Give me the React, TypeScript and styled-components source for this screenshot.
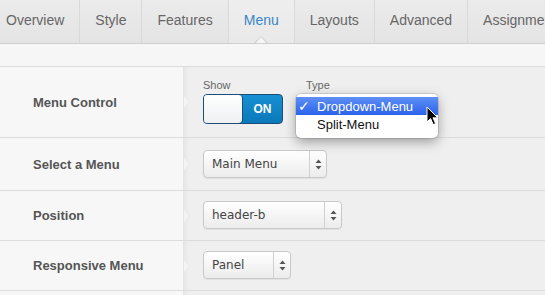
import styled, { createGlobalStyle } from 'styled-components';

const GlobalStyle = createGlobalStyle`
  html, body {
    margin: 0;
    padding: 0;
    background: #efefef;
  }
  body {
    font-family: "Liberation Sans", Arial, sans-serif;
  }
`;

const tabs = ['Overview', 'Style', 'Features', 'Menu', 'Layouts', 'Advanced', 'Assignments'];

const SelectArrows = () => (
  <svg width="7" height="11" viewBox="0 0 7 11">
    <path d="M3.5 0.5 L6.5 4 L0.5 4 Z" fill="#555" />
    <path d="M3.5 10.5 L6.5 7 L0.5 7 Z" fill="#555" />
  </svg>
);

const Cursor = () => (
  <CursorMark width="13" height="20" viewBox="0 0 13 20">
    <path
      d="M1 1 L1 16 L4.6 12.6 L7.2 18.6 L9.6 17.6 L7 11.8 L11.8 11.8 Z"
      fill="#000"
      stroke="#fff"
      strokeWidth="1"
      strokeLinejoin="round"
    />
  </CursorMark>
);

const App = () => {
  return (
    <>
      <GlobalStyle />
      <Page>
        <TabBar>
          <TabList>
            {tabs.map((tab) => (
              <Tab key={tab} $active={tab === 'Menu'}>
                {tab}
              </Tab>
            ))}
          </TabList>
        </TabBar>
        <Strip />

        <Row>
          <LabelCell>Menu Control</LabelCell>
          <ControlCell $pad="12px 19px 13px">
            <Fields>
              <Field>
                <FieldLabel>Show</FieldLabel>
                <Toggle>
                  <Knob />
                  <ToggleOn>ON</ToggleOn>
                </Toggle>
              </Field>
              <Field>
                <FieldLabel>Type</FieldLabel>
                <PopupSlot>
                  <Popup>
                    <PopupItem $selected>
                      <Check>✓</Check>Dropdown-Menu
                    </PopupItem>
                    <PopupItem>
                      <Check />
                      Split-Menu
                    </PopupItem>
                    <Cursor />
                  </Popup>
                </PopupSlot>
              </Field>
            </Fields>
          </ControlCell>
        </Row>

        <Row>
          <LabelCell>Select a Menu</LabelCell>
          <ControlCell $pad="12px 19px 12px">
            <Select $width={124}>
              <SelectValue>Main Menu</SelectValue>
              <SelectButton>
                <SelectArrows />
              </SelectButton>
            </Select>
          </ControlCell>
        </Row>

        <Row>
          <LabelCell>Position</LabelCell>
          <ControlCell $pad="10px 19px 11px">
            <Select $width={139}>
              <SelectValue>header-b</SelectValue>
              <SelectButton>
                <SelectArrows />
              </SelectButton>
            </Select>
          </ControlCell>
        </Row>

        <Row>
          <LabelCell>Responsive Menu</LabelCell>
          <ControlCell $pad="10px 19px 11px">
            <Select $width={88}>
              <SelectValue>Panel</SelectValue>
              <SelectButton>
                <SelectArrows />
              </SelectButton>
            </Select>
          </ControlCell>
        </Row>

        <Row>
          <LabelCell />
          <ControlCell $pad="20px 19px" />
        </Row>
      </Page>
    </>
  );
};

export default App;

const Page = styled.div`
  width: 545px;
  height: 295px;
  overflow: hidden;
  background: #efefef;
`;

const TabBar = styled.nav`
  height: 43px;
  background: linear-gradient(#ebebeb, #e4e4e4);
  border-bottom: 1px solid #d0d0d0;
  position: relative;
  z-index: 2;
  overflow: hidden;
`;

const TabList = styled.ul`
  display: flex;
  margin: 0 0 0 -9px;
  padding: 0;
  list-style: none;
  height: 44px;
  white-space: nowrap;
`;

const Tab = styled.li<{ $active?: boolean }>`
  position: relative;
  flex: none;
  padding: 0 15px;
  height: 43px;
  line-height: 40px;
  font-size: 14px;
  color: ${(p) => (p.$active ? '#3a86c6' : '#666')};
  background: ${(p) => (p.$active ? 'linear-gradient(#eeeeee, #e9e9e9)' : 'transparent')};
  border-right: 1px solid #d9d9d9;

  &::before,
  &::after {
    content: '';
    display: ${(p) => (p.$active ? 'block' : 'none')};
    position: absolute;
    left: 50%;
    width: 0;
    height: 0;
    border-style: solid;
    border-color: transparent;
  }
  &::before {
    bottom: 0;
    margin-left: -7px;
    border-width: 0 7px 7px;
    border-bottom-color: #d0d0d0;
  }
  &::after {
    bottom: -1px;
    margin-left: -6px;
    border-width: 0 6px 7px;
    border-bottom-color: #f6f6f6;
  }
`;

const Strip = styled.div`
  height: 22px;
  background: #f6f6f6;
  border-bottom: 1px solid #dcdcdc;
`;

const Row = styled.div`
  display: grid;
  grid-template-columns: 184px 1fr;
  border-bottom: 1px solid #dcdcdc;
`;

const LabelCell = styled.div`
  position: relative;
  z-index: 1;
  display: flex;
  align-items: center;
  padding-left: 33px;
  background: #f7f7f7;
  border-right: 1px solid #e4e4e4;
  font-size: 13px;
  font-weight: bold;
  color: #555;

  &::before,
  &::after {
    content: '';
    position: absolute;
    top: 50%;
    width: 0;
    height: 0;
    border-style: solid;
    border-color: transparent;
  }
  &::before {
    right: -7px;
    margin-top: -7px;
    border-width: 7px 0 7px 6px;
    border-left-color: #e8e8e8;
  }
  &::after {
    right: -6px;
    margin-top: -6px;
    border-width: 6px 0 6px 5px;
    border-left-color: #f4f4f4;
  }
`;

const ControlCell = styled.div<{ $pad: string }>`
  padding: ${(p) => p.$pad};
  background: #efefef;
  box-shadow: inset 5px 0 5px -4px rgba(0, 0, 0, 0.06);
`;

const Fields = styled.div`
  display: flex;
  gap: 23px;
`;

const Field = styled.div`
  display: flex;
  flex-direction: column;
  gap: 2px;
`;

const FieldLabel = styled.span`
  font-size: 11px;
  line-height: 13px;
  color: #666;
`;

const Toggle = styled.div`
  display: flex;
  width: 80px;
  height: 30px;
  box-sizing: border-box;
  border: 1px solid #1c4d78;
  border-radius: 4px;
  overflow: hidden;
  background: linear-gradient(#1790d2, #0a79ba);
`;

const Knob = styled.div`
  width: 39px;
  box-sizing: border-box;
  background: linear-gradient(#ffffff, #eef0f2);
  border-right: 1px solid #1c4d78;
  border-radius: 0 4px 4px 0;
`;

const ToggleOn = styled.div`
  flex: 1;
  display: flex;
  align-items: center;
  justify-content: center;
  color: #fff;
  font-size: 12px;
  font-weight: bold;
`;

const PopupSlot = styled.div`
  position: relative;
  width: 132px;
  height: 30px;
`;

const Popup = styled.div`
  position: absolute;
  top: 0;
  left: -10px;
  width: 142px;
  padding: 3px 0 5px;
  background: #fff;
  border-radius: 5px;
  box-shadow: 0 4px 12px rgba(0, 0, 0, 0.35), 0 0 0 1px rgba(0, 0, 0, 0.1);
  z-index: 5;
`;

const PopupItem = styled.div<{ $selected?: boolean }>`
  display: flex;
  align-items: center;
  height: 18px;
  font-size: 13px;
  color: ${(p) => (p.$selected ? '#fff' : '#111')};
  background: ${(p) => (p.$selected ? 'linear-gradient(#5f8ff6, #2b63ea)' : 'transparent')};
`;

const Check = styled.span`
  width: 19px;
  padding-left: 2px;
  font-family: "DejaVu Sans", sans-serif;
  font-size: 14px;
  font-weight: bold;
`;

const CursorMark = styled.svg`
  position: absolute;
  left: 130px;
  top: 12px;
`;

const Select = styled.div<{ $width: number }>`
  display: flex;
  width: ${(p) => p.$width}px;
  height: 28px;
  box-sizing: border-box;
  border: 1px solid #c9c9c9;
  border-radius: 4px;
  background: linear-gradient(#ffffff, #ececec);
  box-shadow: 0 1px 1px rgba(0, 0, 0, 0.06);
`;

const SelectValue = styled.div`
  flex: 1;
  display: flex;
  align-items: center;
  padding-left: 8px;
  font-family: "DejaVu Sans", Verdana, sans-serif;
  font-size: 12px;
  color: #444;
`;

const SelectButton = styled.div`
  width: 16px;
  display: flex;
  align-items: center;
  justify-content: center;
  border-left: 1px solid #d0d0d0;
`;
